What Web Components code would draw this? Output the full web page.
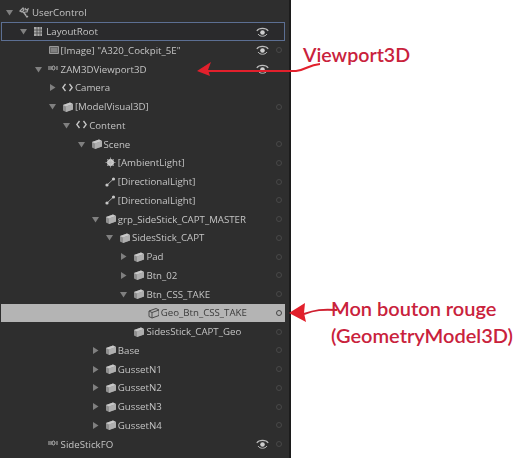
<!DOCTYPE html>
<html>

<head>
    <meta charset="utf-8">
    <title>Objects and Timeline</title>
    <style>
        html, body {
            margin: 0;
            background: #fff;
        }
    </style>
</head>

<body>
    <script>
        const icons = {
            tool: '<path d="M1 4l3-3 1 2-2 2zM4 5l3 3M6 1l1 2 2-1-1 3-2 0-1 1 3 4 1-1" fill="none" stroke="#a8a8a8" stroke-width="1.2"/>',
            grid: '<path d="M1 1h8v9H1z" fill="#aaa"/><path d="M1 4h8M1 7h8M4 1v9M7 1v9" stroke="#444" stroke-width=".8"/>',
            image: '<path d="M1.500 2.500h9v7h-9z" fill="#666" stroke="#999"/><path d="M3 4h6v4H3z" fill="#808080"/>',
            viewport: '<path d="M1 3v4M3 3v4M5.500 3a1.500 2 0 1 0 .01 0M9 3v4" fill="none" stroke="#b4b4b4" stroke-width="1"/>',
            code: '<path d="M3.500 2L.8 5.500l2.700 3.500M7.500 2l2.700 3.500L7.500 9" fill="none" stroke="#c8c8c8" stroke-width="1.300"/>',
            cube: '<path d="M1 4l7-2.500 3 1.500v5.500L4 11 1 9.500z" fill="#8f8f8f"/><path d="M1 4l3 1.500 7-2.500-3-1.500z" fill="#c8c8c8"/><path d="M4 5.500V11l7-2.500V3z" fill="#aeaeae"/>',
            outline: '<path d="M1 4l7-2.500 3 1.500v5.500L4 11 1 9.500zM1 4l3 1.500L11 3M4 5.500V11" fill="none" stroke="#4a4a4a"/>',
            sun: '<circle cx="5.500" cy="5.500" r="3.500" fill="#cfcfcf"/><path d="M5.500 .5v10M.5 5.500h10M2 2l7 7M9 2l-7 7" stroke="#b8b8b8" stroke-width=".7"/>',
            light: '<path d="M1.500 9.500L9 2.500" stroke="#a4a4a4"/><circle cx="2" cy="9" r="1.600" fill="#c8c8c8"/><circle cx="8.500" cy="3" r="1.600" fill="#c8c8c8"/>'
        };

        customElements.define("tree-panel", class extends HTMLElement {
            connectedCallback() {
                this.attachShadow({ mode: "open" }).innerHTML = `
                    <style>
                        :host {
                            display: block;
                            box-sizing: border-box;
                            width: 291px;
                            height: 458px;
                            padding: 3.600px 4px 0 1px;
                            background: #2e2e2e;
                            border-right: 2px solid #1c1c1c;
                            filter: blur(.45px);
                        }
                    </style>
                    <slot></slot>`;
            }
        });

        customElements.define("tree-row", class extends HTMLElement {
            connectedCallback() {
                let depth = +this.getAttribute("depth");
                let twist = this.getAttribute("twist"); // down, right or nothing
                let icon = this.getAttribute("icon");
                let arrow = twist == "down" ? '<path d="M0 1h7L3.500 6.500z" fill="#808080"/>' :
                    twist == "right" ? '<path d="M1 0v7l5.500-3.500z" fill="#808080"/>' : "";
                let eye = this.hasAttribute("eye") ? `<svg class="eye" viewBox="0 0 13 12" width="13" height="12">
                    <path d="M.8 5C3 1.500 10 1.500 12.200 5" fill="none" stroke="#bdbdbd" stroke-width="1.100"/>
                    <path d="M2 8c2 3 7 3 9 0" fill="none" stroke="#bdbdbd" stroke-width="1"/>
                    <circle cx="6.500" cy="6.500" r="2.300" fill="#cfcfcf"/></svg>` : "";
                let dot = this.hasAttribute("nodot") ? "" : '<i class="dot"></i>';
                this.attachShadow({ mode: "open" }).innerHTML = `
                    <style>
                        :host {
                            position: relative;
                            display: flex;
                            box-sizing: border-box;
                            align-items: center;
                            height: 18.750px;
                            padding-left: calc(${depth} * 14.300px + 5px);
                            font: 9.700px "Open Sans", "Liberation Sans", sans-serif;
                            color: #c4c4c4;
                            white-space: nowrap;
                        }
                        :host([selected]) {
                            outline: 1px solid #5c6f93;
                            outline-offset: -1px;
                            background: #2a2a2c;
                        }
                        :host([picked]) {
                            background: #b4b4b4;
                            color: #3a3a3a;
                        }
                        .twist { width: 13px; flex: none; display: flex; align-items: center; }
                        .icon { width: 11px; margin-right: 2px; flex: none; display: block; }
                        .label { flex: 1; }
                        .eye { position: absolute; left: 255px; }
                        .dot {
                            position: absolute;
                            left: 275px;
                            width: 4px;
                            height: 4px;
                            border: 1px solid #484848;
                            border-radius: 50%;
                        }
                        :host([picked]) .dot { border-color: #444; }
                    </style>
                    <span class="twist"><svg width="7" height="7">${arrow}</svg></span>
                    <svg class="icon" viewBox="0 0 11 12" width="11" height="12">${icons[icon] || ""}</svg>
                    <span class="label"><slot></slot></span>
                    ${eye}${dot}`;
            }
        });

        // red callouts drawn by hand over the screenshot
        customElements.define("call-out", class extends HTMLElement {
            connectedCallback() {
                this.attachShadow({ mode: "open" }).innerHTML = `
                    <style>
                        :host {
                            position: absolute;
                            left: ${this.getAttribute("x")}px;
                            top: ${this.getAttribute("y")}px;
                            font: 600 ${this.getAttribute("size")}px/27px Lato, "Liberation Sans", sans-serif;
                            color: #c9223c;
                            white-space: nowrap;
                        }
                    </style>
                    <slot></slot>`;
            }
        });

        customElements.define("red-arrows", class extends HTMLElement {
            connectedCallback() {
                this.attachShadow({ mode: "open" }).innerHTML = `
                    <style>
                        :host { position: absolute; left: 0; top: 0; width: 515px; height: 458px; pointer-events: none; }
                    </style>
                    <svg width="515" height="458" viewBox="0 0 515 458">
                        <path d="M205 71H296C306 70 308 65 320 64" fill="none" stroke="#e2202c" stroke-width="2"/>
                        <path d="M197 71L211 62L208 70L210 76z" fill="#e2202c"/>
                        <path d="M304 314C315 310 322 309 337 310" fill="none" stroke="#cf2030" stroke-width="2"/>
                        <path d="M289 313L305 303L304 313L306 322z" fill="#e2202c"/>
                    </svg>`;
            }
        });
    </script>

    <tree-panel>
        <tree-row depth="0" twist="down" icon="tool" nodot>UserControl</tree-row>
        <tree-row depth="1" twist="down" icon="grid" eye nodot selected>LayoutRoot</tree-row>
        <tree-row depth="2" icon="image" eye>[Image] "A320_Cockpit_5E"</tree-row>
        <tree-row depth="2" twist="down" icon="viewport" eye nodot>ZAM3DViewport3D</tree-row>
        <tree-row depth="3" twist="right" icon="code" nodot>Camera</tree-row>
        <tree-row depth="3" twist="down" icon="cube">[ModelVisual3D]</tree-row>
        <tree-row depth="4" twist="down" icon="code" nodot>Content</tree-row>
        <tree-row depth="5" twist="down" icon="cube">Scene</tree-row>
        <tree-row depth="6" icon="sun">[AmbientLight]</tree-row>
        <tree-row depth="6" icon="light">[DirectionalLight]</tree-row>
        <tree-row depth="6" icon="light">[DirectionalLight]</tree-row>
        <tree-row depth="6" twist="down" icon="cube">grp_SideStick_CAPT_MASTER</tree-row>
        <tree-row depth="7" twist="down" icon="cube">SidesStick_CAPT</tree-row>
        <tree-row depth="8" twist="right" icon="cube">Pad</tree-row>
        <tree-row depth="8" twist="right" icon="cube">Btn_02</tree-row>
        <tree-row depth="8" twist="down" icon="cube">Btn_CSS_TAKE</tree-row>
        <tree-row depth="9" icon="outline" picked>Geo_Btn_CSS_TAKE</tree-row>
        <tree-row depth="8" icon="cube">SidesStick_CAPT_Geo</tree-row>
        <tree-row depth="6" twist="right" icon="cube">Base</tree-row>
        <tree-row depth="6" twist="right" icon="cube">GussetN1</tree-row>
        <tree-row depth="6" twist="right" icon="cube">GussetN2</tree-row>
        <tree-row depth="6" twist="right" icon="cube">GussetN3</tree-row>
        <tree-row depth="6" twist="right" icon="cube">GussetN4</tree-row>
        <tree-row depth="2" icon="viewport" eye>SideStickFO</tree-row>
    </tree-panel>
    <red-arrows></red-arrows>
    <call-out x="303" y="41" size="19.600">Viewport3D</call-out>
    <call-out x="331" y="295" size="20">Mon bouton rouge<br>(GeometryModel3D)</call-out>
</body>

</html>
